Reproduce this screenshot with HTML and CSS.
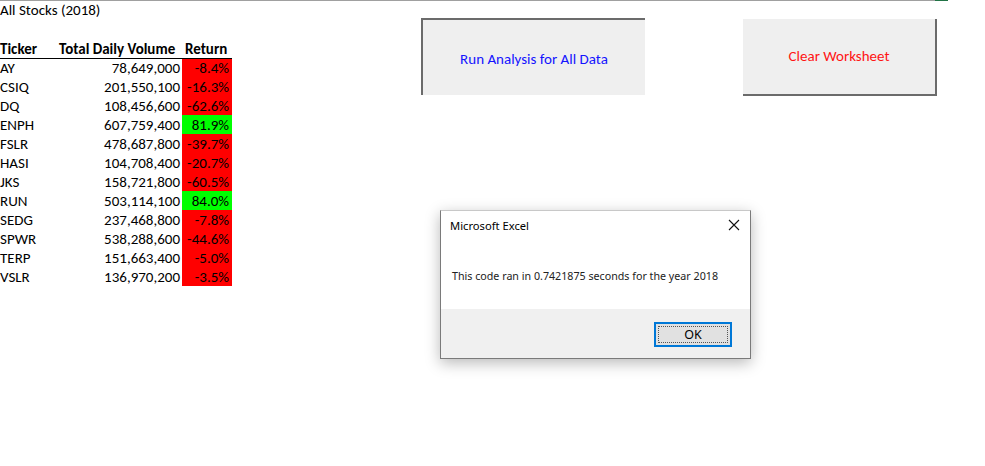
FILE: index.html
```html
<!DOCTYPE html>
<html lang="en">
<head>
<meta charset="utf-8">
<title>All Stocks (2018)</title>
<link rel="stylesheet" href="styles.css">
</head>
<body>
<div class="top-rule"><span class="rule-gray"></span><span class="rule-green"></span></div>
<main class="sheet">
  <section class="data">
    <div class="row title">All Stocks (2018)</div>
    <div class="row blank"></div>
    <table class="grid">
      <thead>
        <tr><th class="c-tick">Ticker</th><th class="c-vol">Total Daily Volume</th><th class="c-ret">Return</th></tr>
      </thead>
      <tbody>
        <tr><td class="c-tick">AY</td><td class="c-vol">78,649,000</td><td class="c-ret neg">-8.4%</td></tr>
        <tr><td class="c-tick">CSIQ</td><td class="c-vol">201,550,100</td><td class="c-ret neg">-16.3%</td></tr>
        <tr><td class="c-tick">DQ</td><td class="c-vol">108,456,600</td><td class="c-ret neg">-62.6%</td></tr>
        <tr><td class="c-tick">ENPH</td><td class="c-vol">607,759,400</td><td class="c-ret pos">81.9%</td></tr>
        <tr><td class="c-tick">FSLR</td><td class="c-vol">478,687,800</td><td class="c-ret neg">-39.7%</td></tr>
        <tr><td class="c-tick">HASI</td><td class="c-vol">104,708,400</td><td class="c-ret neg">-20.7%</td></tr>
        <tr><td class="c-tick">JKS</td><td class="c-vol">158,721,800</td><td class="c-ret neg">-60.5%</td></tr>
        <tr><td class="c-tick">RUN</td><td class="c-vol">503,114,100</td><td class="c-ret pos">84.0%</td></tr>
        <tr><td class="c-tick">SEDG</td><td class="c-vol">237,468,800</td><td class="c-ret neg">-7.8%</td></tr>
        <tr><td class="c-tick">SPWR</td><td class="c-vol">538,288,600</td><td class="c-ret neg">-44.6%</td></tr>
        <tr><td class="c-tick">TERP</td><td class="c-vol">151,663,400</td><td class="c-ret neg">-5.0%</td></tr>
        <tr><td class="c-tick">VSLR</td><td class="c-vol">136,970,200</td><td class="c-ret neg">-3.5%</td></tr>
      </tbody>
    </table>
  </section>
  <div class="btn btn-run">Run Analysis for All Data</div>
  <div class="spacer"></div>
  <div class="btn btn-clear">Clear Worksheet</div>
</main>

<div class="dialog" role="dialog" aria-label="Microsoft Excel">
  <div class="dlg-body">
    <div class="dlg-head">
      <span class="dlg-title">Microsoft Excel</span>
      <svg class="dlg-close" width="12" height="12" viewBox="0 0 12 12" aria-hidden="true"><path d="M1 1 L11 11 M11 1 L1 11" stroke="#111" stroke-width="1.1" fill="none"/></svg>
    </div>
    <p class="dlg-msg">This code ran in 0.7421875 seconds for the year 2018</p>
  </div>
  <div class="dlg-foot">
    <button class="ok"><span class="ok-inner">OK</span></button>
  </div>
</div>
</body>
</html>
```

FILE: styles.css
```css
* { box-sizing: border-box; }
html, body { margin: 0; padding: 0; background: #fff; }
body {
  width: 985px;
  height: 466px;
  overflow: hidden;
  position: relative;
  font-family: Carlito, "Open Sans", sans-serif;
  font-size: 15px;
  color: #000;
}

.top-rule { display: flex; height: 1px; }
.rule-gray { width: 935px; background: #a0a0a0; }
.rule-green { width: 13px; background: #217346; }

.sheet {
  display: grid;
  grid-template-columns: 421px 224px 98px 194px;
  align-items: start;
}

.data { width: 240px; }
.row { height: 19px; line-height: 19px; white-space: nowrap; }
.title { padding-left: 0; }

.grid {
  border-collapse: collapse;
  table-layout: fixed;
  width: 232px;
}
.grid th, .grid td {
  height: 19px;
  padding: 0;
  line-height: 18px;
  white-space: nowrap;
  overflow: visible;
}
.grid thead th {
  font-weight: bold;
  border-bottom: 1px solid #000;
  text-align: left;
  vertical-align: bottom;
}
.c-tick { width: 57px; text-align: left; }
.c-vol { width: 125px; text-align: right; padding-right: 2px !important; }
.c-ret { width: 50px; text-align: right; padding-right: 3px !important; }
.grid thead .c-vol { text-align: left; padding-left: 2px !important; }
.grid thead .c-ret { text-align: left; padding-left: 3px !important; }
.neg { background: #ff0000; }
.pos { background: #00ff00; }

.btn {
  height: 77px;
  margin-top: 17px;
  background: #efefef;
  display: flex;
  align-items: center;
  justify-content: center;
  white-space: nowrap;
}
.btn-run {
  color: #1414ff;
  border-top: 2px solid #6b6b6b;
  border-left: 2px solid #6b6b6b;
  padding-top: 3px;
}
.btn-clear {
  color: #ff1414;
  border-right: 2px solid #6b6b6b;
  border-bottom: 2px solid #6b6b6b;
  padding-bottom: 1px;
  margin-top: 18px;
  height: 77px;
}

.dialog {
  position: absolute;
  left: 440px;
  top: 210px;
  width: 311px;
  height: 149px;
  border: 1px solid #7a7a7a;
  border-top-color: #c8c8c8;
  background: #fff;
  box-shadow: 0 4px 14px rgba(0,0,0,0.28);
  font-family: "Noto Sans", sans-serif;
  font-size: 10.7px;
  display: flex;
  flex-direction: column;
}
.dlg-body { height: 98px; background: #fff; }
.dlg-head {
  display: flex;
  justify-content: space-between;
  align-items: center;
  padding: 2px 10px 0 9px;
  height: 26px;
}
.dlg-title { color: #000; font-size: 11.2px; }
.dlg-close { display: block; }
.dlg-msg {
  margin: 0;
  padding: 32px 0 0 11px;
  color: #222;
}
.dlg-foot {
  flex: 1;
  background: #f0f0f0;
  display: flex;
  justify-content: flex-end;
  align-items: flex-start;
  padding: 13px 18px 0 0;
}
.ok {
  width: 78px;
  height: 25px;
  padding: 2px;
  border: 2px solid #0078d7;
  background: #e1e1e1;
  font: inherit;
  font-size: 12.5px;
  color: #000;
  display: flex;
}
.ok-inner {
  flex: 1;
  border: 1px dotted #555;
  display: flex;
  align-items: center;
  justify-content: center;
}
```
